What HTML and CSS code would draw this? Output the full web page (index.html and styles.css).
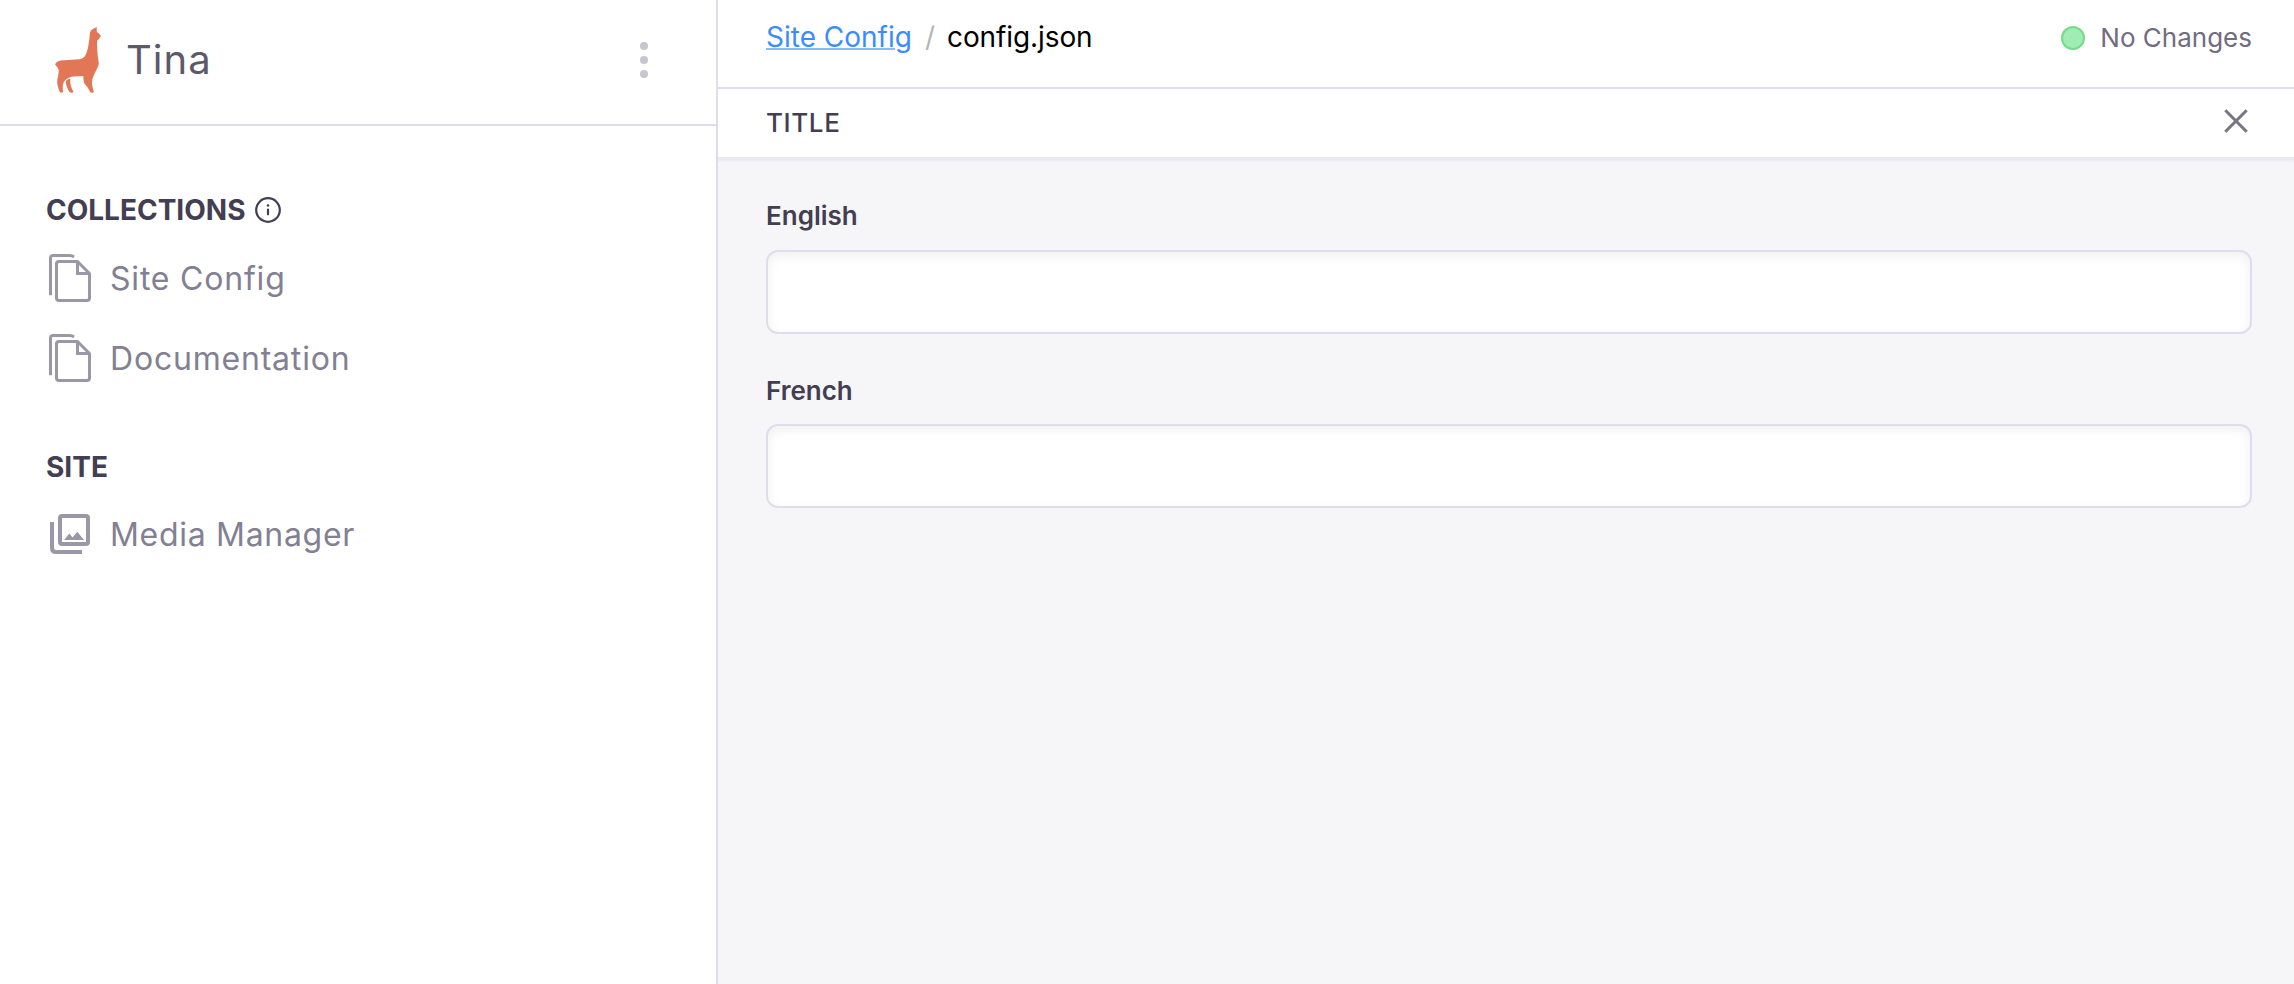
FILE: index.html
```html
<!DOCTYPE html>
<html lang="en">
<head>
<meta charset="utf-8">
<title>Tina</title>
<link rel="stylesheet" href="styles.css">
</head>
<body>
<div class="app">
  <aside class="sidebar">
    <header class="brand">
      <svg class="logo" viewBox="75 50 138 199" fill="#e17756">
        <path d="M196 52 C188 55 181 60 180 68 C178 90 175 118 168 132 C164 141 158 146 148 147 L92 151 C84 152 76 157 75 164 C79 168 84 173 86 180 C86 195 81 206 81 217 C82 227 86 238 89 246 C91 249 97 248 99 245 C98 237 97 228 100 219 C104 208 116 201 130 199 L160 198 C160 213 162 220 168 226 C174 233 178 240 180 246 C183 249 190 249 192 246 C189 237 186 226 186 216 C188 196 202 180 207 160 C204 142 200 110 202 90 C205 88 210 86 210 81 L213 77 C210 71 205 69 202 66 C199 61 201 56 201 51 Z"/>
        <path d="M119 206 C112 208 107 211 107 216 C108 228 114 239 118 246 C121 249 128 249 131 246 C124 236 119 222 121 207 Z"/>
      </svg>
      <span class="brand-name">Tina</span>
      <svg class="kebab" viewBox="0 0 8 36" fill="#c7c6ce"><circle cx="4" cy="4" r="4"/><circle cx="4" cy="18" r="4"/><circle cx="4" cy="32" r="4"/></svg>
    </header>
    <nav class="nav">
      <h2 class="nav-heading">Collections
        <svg class="info" viewBox="0 0 26 26" fill="none" stroke="#433e52" stroke-width="2.2"><circle cx="13" cy="13" r="11.8"/><path d="M13 12.5V17.3" stroke-linecap="round"/><circle cx="13" cy="8.5" r="1.3" fill="#433e52" stroke="none"/></svg>
      </h2>
      <a class="nav-item">
        <svg class="icon" viewBox="0 0 42 48" fill="none" stroke="#9a98a6" stroke-width="3"><path d="M1.5 41.3V4Q1.5 1.5 4 1.5H21Q23 1.5 25 3"/><path d="M10 7.5H28.5L40.5 19.5V44Q40.5 46.5 38 46.5H10Q7.5 46.5 7.5 44V10Q7.5 7.5 10 7.5Z"/><path d="M28.5 7.5V19.5H40.5"/></svg>
        <span>Site Config</span>
      </a>
      <a class="nav-item">
        <svg class="icon" viewBox="0 0 42 48" fill="none" stroke="#9a98a6" stroke-width="3"><path d="M1.5 41.3V4Q1.5 1.5 4 1.5H21Q23 1.5 25 3"/><path d="M10 7.5H28.5L40.5 19.5V44Q40.5 46.5 38 46.5H10Q7.5 46.5 7.5 44V10Q7.5 7.5 10 7.5Z"/><path d="M28.5 7.5V19.5H40.5"/></svg>
        <span>Documentation</span>
      </a>
      <h2 class="nav-heading nav-heading-site">Site</h2>
      <a class="nav-item nav-item-media">
        <svg class="icon" viewBox="0 0 42 48" fill="none" stroke="#9a98a6" stroke-width="4"><path d="M3 12V38Q3 42 7 42H33"/><rect x="11" y="6" width="28" height="28" rx="2"/><path d="M15 30L20.3 23.5L23.5 27.5L28.3 21.8L35 30Z" fill="#9a98a6" stroke="none"/></svg>
        <span>Media Manager</span>
      </a>
    </nav>
  </aside>
  <main class="main">
    <header class="topbar">
      <div class="crumbs"><a class="crumb-link">Site Config</a><span class="crumb-sep">/</span><span class="crumb-current">config.json</span></div>
      <div class="status"><span class="status-dot"></span><span>No Changes</span></div>
    </header>
    <div class="group-header">
      <span>Title</span>
      <svg class="close" viewBox="0 0 24 24" stroke="#777581" stroke-width="3"><path d="M1.3 1.3L22.7 22.7M22.7 1.3L1.3 22.7"/></svg>
    </div>
    <form class="fields">
      <label class="field"><span class="field-label">English</span><input class="field-input" type="text"></label>
      <label class="field"><span class="field-label">French</span><input class="field-input" type="text"></label>
    </form>
  </main>
</div>
</body>
</html>
```

FILE: styles.css
```css
* { box-sizing: border-box; }
body { margin: 0; font-family: Inter, "Liberation Sans", sans-serif; background: #fff; }
.app { display: flex; height: 984px; overflow: hidden; }
.sidebar { width: 718px; flex: none; border-right: 2px solid #dfdcec; }
.brand { display: flex; align-items: center; height: 126px; padding: 0 68px 4px 55px; border-bottom: 2px solid #dfdcec; }
.logo { width: 46px; height: 66px; }
.brand-name { margin-left: 25px; font-size: 40px; line-height: 48px; letter-spacing: 1px; color: #5c596a; }
.kebab { width: 8px; height: 36px; margin-left: auto; }
.nav { padding: 64px 46px 0; }
.nav-heading { display: flex; align-items: center; gap: 10px; margin: 0 0 12px; height: 40px; font-size: 28px; font-weight: 700; text-transform: uppercase; color: #433e52; }
.nav-heading-site { margin-top: 53px; margin-bottom: 11px; }
.info { width: 26px; height: 26px; }
.nav-item { display: flex; align-items: center; gap: 19px; height: 72px; margin-bottom: 8px; padding-left: 3px; font-size: 32px; letter-spacing: 0.8px; color: #828092; }
.nav-item-media { letter-spacing: 0.7px; }
.icon { width: 42px; height: 48px; flex: none; }
.main { flex: 1; display: flex; flex-direction: column; background: #f6f6f9; }
.topbar { display: flex; justify-content: space-between; height: 89px; padding: 17px 42px 0 48px; background: #fff; border-bottom: 2px solid #dfdcec; }
.crumbs { display: flex; height: 40px; align-items: center; font-size: 28px; color: #000; }
.crumb-link { color: #3b8cff; text-decoration: underline; text-decoration-color: #84bcfa; text-decoration-thickness: 2px; }
.crumb-sep { margin: 0 12px 0 13px; color: #b5b5b5; }
.crumb-current { letter-spacing: -0.1px; }
.status { display: flex; align-items: center; height: 40px; gap: 15px; font-size: 26px; color: #716c7f; }
.status-dot { width: 24px; height: 24px; margin-top: 2px; border-radius: 50%; background: #9fecb4; border: 2px solid #74dc88; }
.group-header { display: flex; align-items: center; justify-content: space-between; height: 68px; padding: 0 46px 2px 48px; background: #fff; font-size: 26px; font-weight: 500; letter-spacing: 0.6px; text-transform: uppercase; color: #433e52; box-shadow: 0 3px 2px 1px #e9e9ef; clip-path: inset(0 0 -8px 0); }
.close { width: 24px; height: 24px; margin-top: -2px; }
.fields { display: flex; flex-direction: column; gap: 40px; padding: 42px 42px 0 48px; }
.field { display: flex; flex-direction: column; gap: 17px; }
.field:first-child { gap: 18px; }
.field-label { font-size: 26px; line-height: 33px; font-weight: 600; color: #433e52; }
.field-input { width: 100%; height: 84px; padding: 0 24px; border: 2px solid #dfdcec; border-radius: 12px; background: #fff; box-shadow: inset 0 4px 12px rgba(0,0,0,.06); font: inherit; outline: none; }
```
